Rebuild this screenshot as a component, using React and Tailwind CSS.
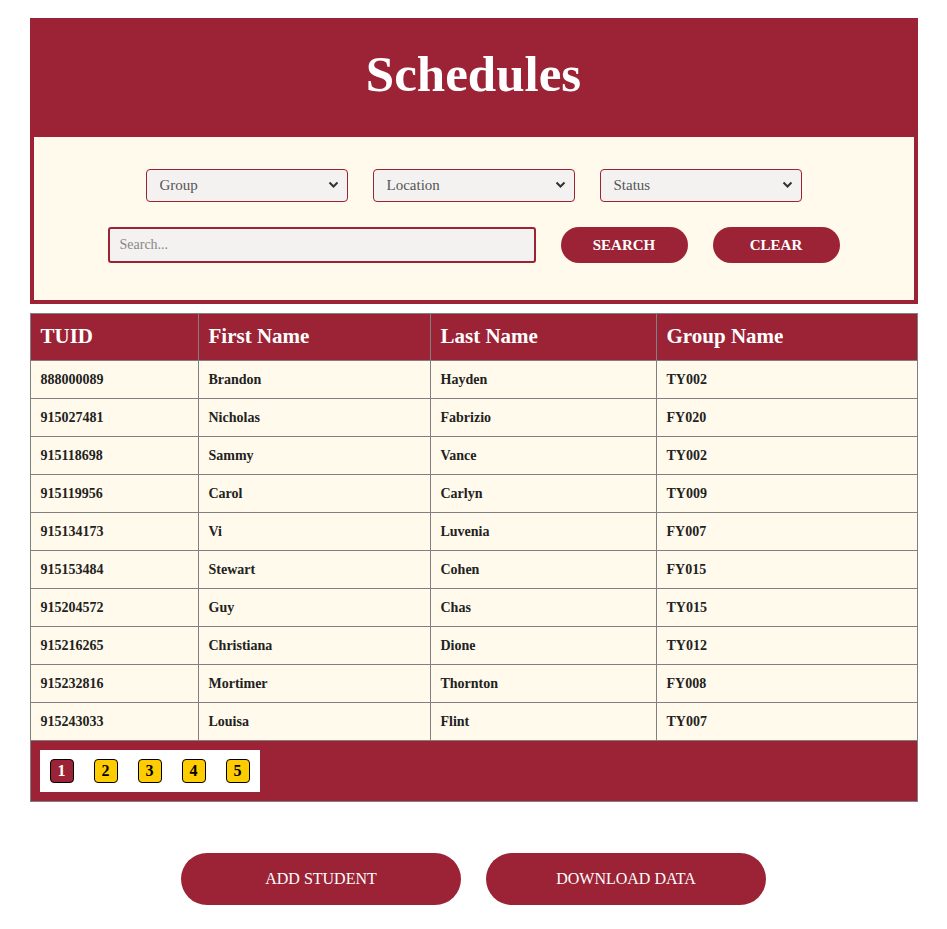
import React from 'react';

const rows = [
  ['888000089', 'Brandon', 'Hayden', 'TY002'],
  ['915027481', 'Nicholas', 'Fabrizio', 'FY020'],
  ['915118698', 'Sammy', 'Vance', 'TY002'],
  ['915119956', 'Carol', 'Carlyn', 'TY009'],
  ['915134173', 'Vi', 'Luvenia', 'FY007'],
  ['915153484', 'Stewart', 'Cohen', 'FY015'],
  ['915204572', 'Guy', 'Chas', 'TY015'],
  ['915216265', 'Christiana', 'Dione', 'TY012'],
  ['915232816', 'Mortimer', 'Thornton', 'FY008'],
  ['915243033', 'Louisa', 'Flint', 'TY007'],
];

function Select({ label }) {
  return (
    <div className="relative w-[202px] h-[33px]">
      <select className="appearance-none w-full h-full rounded-[4px] border border-[#9b2335] bg-[#f4f1f1] pl-[13px] text-[15px] text-[#555] outline-none">
        <option>{label}</option>
      </select>
      <svg className="absolute right-[9px] top-[12px] pointer-events-none" width="11" height="8" viewBox="0 0 11 8">
        <path d="M1.5 1.5 L5.5 5.5 L9.5 1.5" fill="none" stroke="#333" strokeWidth="2" />
      </svg>
    </div>
  );
}

export default function App() {
  return (
    <div className="min-h-screen bg-white pt-[18px] pb-6 font-['Liberation_Serif',serif]">
      <div className="w-[888px] mx-auto bg-[#9b2335] px-[4px] pb-[4px]">
        <h1 className="h-[119px] pb-[6px] flex items-center justify-center text-white text-[51px] font-bold">Schedules</h1>
        <div className="bg-[#fffaeb] pt-[32px] pb-[37px] flex flex-col items-center">
          <div className="flex gap-[25px]">
            <Select label="Group" />
            <Select label="Location" />
            <Select label="Status" />
          </div>
          <div className="flex gap-[25px] mt-[25px]">
            <input
              placeholder="Search..."
              className="w-[428px] h-[36px] rounded-[3px] border-2 border-[#9b2335] bg-[#f4f1f1] px-[10px] text-[14px] placeholder:text-[#888] outline-none"
            />
            <button className="w-[127px] h-[36px] rounded-full bg-[#9b2335] text-white text-[15px] font-bold">SEARCH</button>
            <button className="w-[127px] h-[36px] rounded-full bg-[#9b2335] text-white text-[15px] font-bold">CLEAR</button>
          </div>
        </div>
      </div>

      <table className="w-[888px] mx-auto mt-[9px] border-collapse border border-[#808080] table-fixed">
        <thead>
          <tr className="bg-[#9b2335] text-white text-[21px] font-bold h-[47px]">
            <th className="w-[168px] border border-[#808080] text-left pl-[10px]">TUID</th>
            <th className="w-[232px] border border-[#808080] text-left pl-[10px]">First Name</th>
            <th className="w-[226px] border border-[#808080] text-left pl-[10px]">Last Name</th>
            <th className="border border-[#808080] text-left pl-[10px]">Group Name</th>
          </tr>
        </thead>
        <tbody>
          {rows.map((r) => (
            <tr key={r[0]} className="bg-[#fffaeb] h-[38px] text-[14px] font-bold text-[#222]">
              {r.map((c, i) => (
                <td key={i} className="border border-[#808080] pl-[10px]">{c}</td>
              ))}
            </tr>
          ))}
          <tr className="bg-[#9b2335] h-[61px]">
            <td colSpan={4} className="border border-[#808080] pl-[9px]">
              <div className="w-[220px] h-[42px] bg-white flex items-center gap-[20px] px-[10px]">
                {[1, 2, 3, 4, 5].map((n) => (
                  <button
                    key={n}
                    className={
                      n === 1
                        ? 'w-[24px] h-[24px] rounded-[4px] border border-black bg-[#9b2335] text-white text-[16px] font-bold leading-none'
                        : 'w-[24px] h-[24px] rounded-[4px] border border-black bg-[#ffcc00] text-black text-[16px] font-bold leading-none'
                    }
                  >
                    {n}
                  </button>
                ))}
              </div>
            </td>
          </tr>
        </tbody>
      </table>

      <div className="flex justify-center gap-[25px] mt-[51px]">
        <button className="w-[280px] h-[52px] rounded-full bg-[#9b2335] text-white text-[16px]">ADD STUDENT</button>
        <button className="w-[280px] h-[52px] rounded-full bg-[#9b2335] text-white text-[16px]">DOWNLOAD DATA</button>
      </div>
    </div>
  );
}
